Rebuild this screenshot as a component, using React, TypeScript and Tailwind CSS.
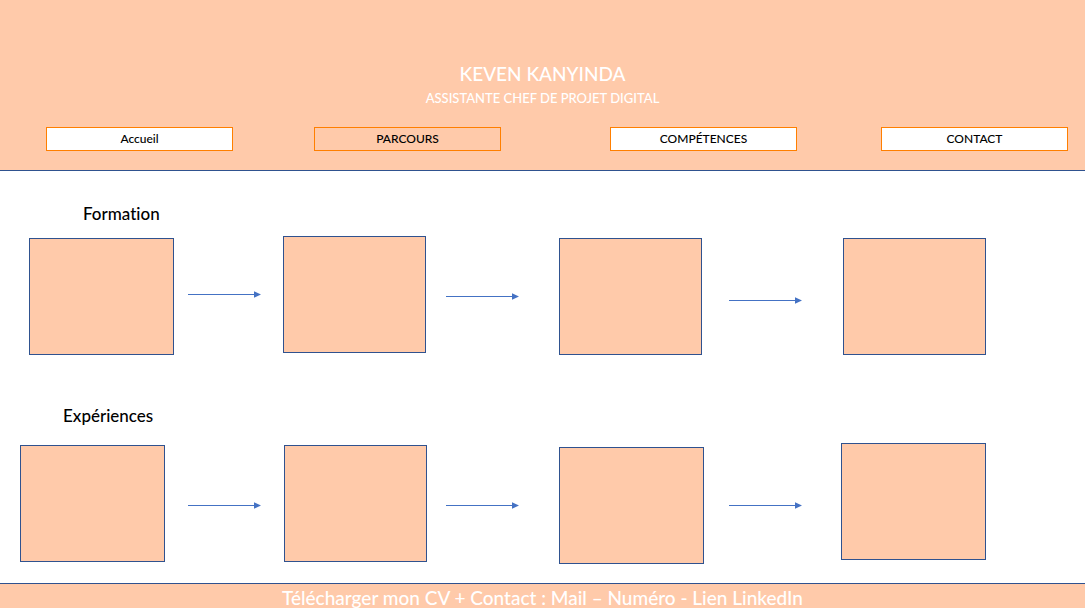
import React from "react";

type Step = { box: string; arrow?: string };

const navItems = [
  { label: "Accueil", href: "#accueil", style: "col-start-2 bg-white" },
  { label: "PARCOURS", href: "#parcours", style: "col-start-4" },
  { label: "COMPÉTENCES", href: "#competences", style: "col-start-6 bg-white" },
  { label: "CONTACT", href: "#contact", style: "col-start-8 bg-white" },
];

const formation: Step[] = [
  { box: "col-start-2 mt-0.5", arrow: "col-start-4 mt-[54px]" },
  { box: "col-start-6", arrow: "col-start-8 mt-14" },
  { box: "col-start-10 mt-0.5", arrow: "col-start-12 mt-15" },
  { box: "col-start-14 mt-0.5" },
];

const experiences: Step[] = [
  { box: "col-start-2 mt-0.5", arrow: "col-start-4 mt-[58px]" },
  { box: "col-start-6 mt-0.5", arrow: "col-start-8 mt-[58px]" },
  { box: "col-start-10 mt-1", arrow: "col-start-12 mt-[58px]" },
  { box: "col-start-14" },
];

function Arrow({ className }: { className: string }) {
  return (
    <div className={`row-start-1 flex h-[9px] items-center ${className}`} aria-hidden="true">
      <div className="h-px flex-1 bg-[#4472c4]" />
      <svg className="h-[7px] w-[7px]" viewBox="0 0 7 7" fill="#4472c4">
        <path d="M0 0.2 L7 3.5 L0 6.8 Z" />
      </svg>
    </div>
  );
}

function Timeline({ steps, columns }: { steps: Step[]; columns: string }) {
  return (
    <div className={`grid items-start ${columns}`}>
      {steps.map((step, i) => (
        <React.Fragment key={i}>
          <div className={`row-start-1 h-[117px] border border-[#2f528f] bg-[#ffcaaa] ${step.box}`} />
          {step.arrow && <Arrow className={step.arrow} />}
        </React.Fragment>
      ))}
    </div>
  );
}

export default function App() {
  return (
    <div className="flex min-h-screen flex-col bg-white font-[Lato,sans-serif] font-medium text-black [font-variant-ligatures:none]">
      <header className="border-b border-[#2f528f] bg-[#ffcaaa] pt-[62px] pb-[19px]">
        <div className="text-center text-white">
          <h1 className="text-[19px] leading-6 font-medium">KEVEN KANYINDA</h1>
          <p className="text-[13px] leading-6">ASSISTANTE CHEF DE PROJET DIGITAL</p>
        </div>
        <nav className="mt-[17px] grid grid-cols-[46fr_187fr_81fr_187fr_109fr_187fr_84fr_187fr_17fr]">
          {navItems.map((item) => (
            <a
              key={item.label}
              href={item.href}
              className={`row-start-1 border border-[#ff7f00] text-center text-[12px] leading-[22px] ${item.style}`}
            >
              {item.label}
            </a>
          ))}
        </nav>
      </header>

      <main className="flex-1">
        <section className="pt-[31px]">
          <h2 className="mb-[10px] pl-[83px] text-[17px] leading-6 font-medium">Formation</h2>
          <Timeline
            steps={formation}
            columns="grid-cols-[29fr_145fr_14fr_73fr_22fr_143fr_20fr_73fr_40fr_143fr_27fr_73fr_41fr_143fr_99fr]"
          />
        </section>
        <section className="pt-[49px]">
          <h2 className="mb-[15px] pl-[63px] text-[17px] leading-6 font-medium">Expériences</h2>
          <Timeline
            steps={experiences}
            columns="grid-cols-[20fr_145fr_23fr_73fr_23fr_143fr_19fr_73fr_40fr_145fr_25fr_73fr_39fr_145fr_99fr]"
          />
        </section>
      </main>

      <footer className="h-[25px] overflow-hidden border-t border-[#2f528f] bg-[#ffcaaa] text-center text-[19px] leading-7 text-white">
        Télécharger mon CV + Contact : Mail – Numéro - Lien LinkedIn
      </footer>
    </div>
  );
}
